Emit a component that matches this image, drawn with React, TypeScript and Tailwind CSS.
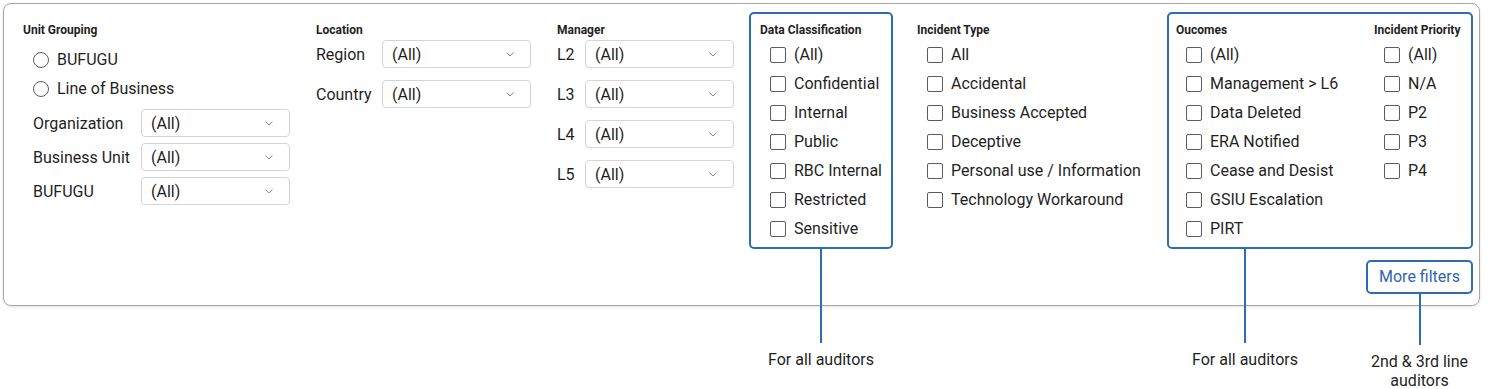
import React from "react";

const Chevron = () => (
  <svg width="8" height="5" viewBox="0 0 8 5" fill="none" className="shrink-0">
    <path d="M0.5 0.5L4 4L7.5 0.5" stroke="#8c8c8c" strokeWidth="1" />
  </svg>
);

const Select = () => (
  <div className="flex h-[28px] w-[149px] items-center justify-between rounded-[4px] border border-[#d4d4d4] pl-[9px] pr-[16px]">
    <span className="translate-y-[1px]">(All)</span>
    <Chevron />
  </div>
);

const Heading = ({ children }: { children: React.ReactNode }) => (
  <div className="h-[14px] text-[12px] font-bold leading-[14px] whitespace-nowrap">{children}</div>
);

const Check = ({ label }: { label: string }) => (
  <div className="flex h-[29px] items-center gap-2 pl-[10px] whitespace-nowrap">
    <span className="h-4 w-4 shrink-0 rounded-[2px] border border-[#5c5c5c]" />
    <span>{label}</span>
  </div>
);

const Radio = ({ label }: { label: string }) => (
  <div className="flex h-[29px] items-center gap-2 pl-[10px]">
    <span className="h-4 w-4 shrink-0 rounded-full border border-[#5c5c5c]" />
    <span>{label}</span>
  </div>
);

const Field = ({ label, labelWidth }: { label: string; labelWidth: string }) => (
  <div className="flex items-center">
    <span className={`${labelWidth} translate-y-[1px]`}>{label}</span>
    <Select />
  </div>
);

const Note = ({ children, className }: { children: React.ReactNode; className: string }) => (
  <div className={`absolute ${className} -translate-x-1/2 text-center text-[16px] leading-[19px] whitespace-nowrap text-[#1f1f1f]`}>
    {children}
  </div>
);

const dataClasses = ["(All)", "Confidential", "Internal", "Public", "RBC Internal", "Restricted", "Sensitive"];
const incidentTypes = ["All", "Accidental", "Business Accepted", "Deceptive", "Personal use / Information", "Technology Workaround"];
const outcomes = ["(All)", "Management > L6", "Data Deleted", "ERA Notified", "Cease and Desist", "GSIU Escalation", "PIRT"];
const priorities = ["(All)", "N/A", "P2", "P3", "P4"];

export default function App() {
  return (
    <div className="min-h-screen bg-white p-[3px] font-['Roboto',sans-serif] text-[16px] text-[#1f1f1f]">
      <div className="flex w-[1477px] items-start rounded-[8px] border border-[#a8a8a8] pt-[8px] pb-[11px] pl-[19px] shadow-[0_1px_3px_rgba(0,0,0,0.12)]">
        {/* Unit Grouping */}
        <div className="w-[293px] pt-[11px]">
          <Heading>Unit Grouping</Heading>
          <div className="mt-[8px]">
            <Radio label="BUFUGU" />
            <Radio label="Line of Business" />
          </div>
          <div className="mt-[6px] flex flex-col gap-[6px] pl-[10px]">
            <Field label="Organization" labelWidth="w-[108px]" />
            <Field label="Business Unit" labelWidth="w-[108px]" />
            <Field label="BUFUGU" labelWidth="w-[108px]" />
          </div>
        </div>

        {/* Location */}
        <div className="w-[241px] pt-[11px]">
          <Heading>Location</Heading>
          <div className="mt-[3px] flex flex-col gap-[12px]">
            <Field label="Region" labelWidth="w-[66px]" />
            <Field label="Country" labelWidth="w-[66px]" />
          </div>
        </div>

        {/* Manager */}
        <div className="w-[192px] pt-[11px]">
          <Heading>Manager</Heading>
          <div className="mt-[3px] flex flex-col gap-[12px]">
            {["L2", "L3", "L4", "L5"].map((l) => (
              <Field key={l} label={l} labelWidth="w-[28px]" />
            ))}
          </div>
        </div>

        {/* Data Classification */}
        <div className="relative w-[144px] rounded-[5px] border-2 border-[#2e6db4] pt-[9px] pb-[4px] pl-[9px]">
          <Heading>Data Classification</Heading>
          <div className="mt-[3px]">
            {dataClasses.map((d) => (
              <Check key={d} label={d} />
            ))}
          </div>
          <span className="absolute top-full left-1/2 h-[96px] w-[2px] -translate-x-1/2 bg-[#2e6db4]" />
          <Note className="top-[calc(100%+103px)] left-1/2">For all auditors</Note>
        </div>

        {/* Incident Type */}
        <div className="ml-[24px] w-[250px] pt-[11px]">
          <Heading>Incident Type</Heading>
          <div className="mt-[3px]">
            {incidentTypes.map((d) => (
              <Check key={d} label={d} />
            ))}
          </div>
        </div>

        {/* Outcomes + Priority */}
        <div className="flex w-[306px] flex-col items-end">
          <div className="relative flex w-full rounded-[5px] border-2 border-[#2e6db4] pt-[9px] pb-[4px] pl-[7px]">
            <div className="w-[198px]">
              <Heading>Oucomes</Heading>
              <div className="mt-[3px]">
                {outcomes.map((d) => (
                  <Check key={d} label={d} />
                ))}
              </div>
            </div>
            <div>
              <Heading>Incident Priority</Heading>
              <div className="mt-[3px]">
                {priorities.map((d) => (
                  <Check key={d} label={d} />
                ))}
              </div>
            </div>
            <span className="absolute top-full left-[75px] h-[96px] w-[2px] bg-[#2e6db4]" />
            <Note className="top-[calc(100%+103px)] left-[76px]">For all auditors</Note>
          </div>
          <div className="relative mt-[11px]">
            <button className="h-[34px] rounded-[5px] border-2 border-[#2e6db4] px-[11px] text-[16px] text-[#2a66ad]">
              More filters
            </button>
            <span className="absolute top-full left-1/2 h-[51px] w-[2px] -translate-x-1/2 bg-[#2e6db4]" />
            <Note className="top-[calc(100%+58px)] left-1/2">
              2nd &amp; 3rd line
              <br />
              auditors
            </Note>
          </div>
        </div>
      </div>
    </div>
  );
}
